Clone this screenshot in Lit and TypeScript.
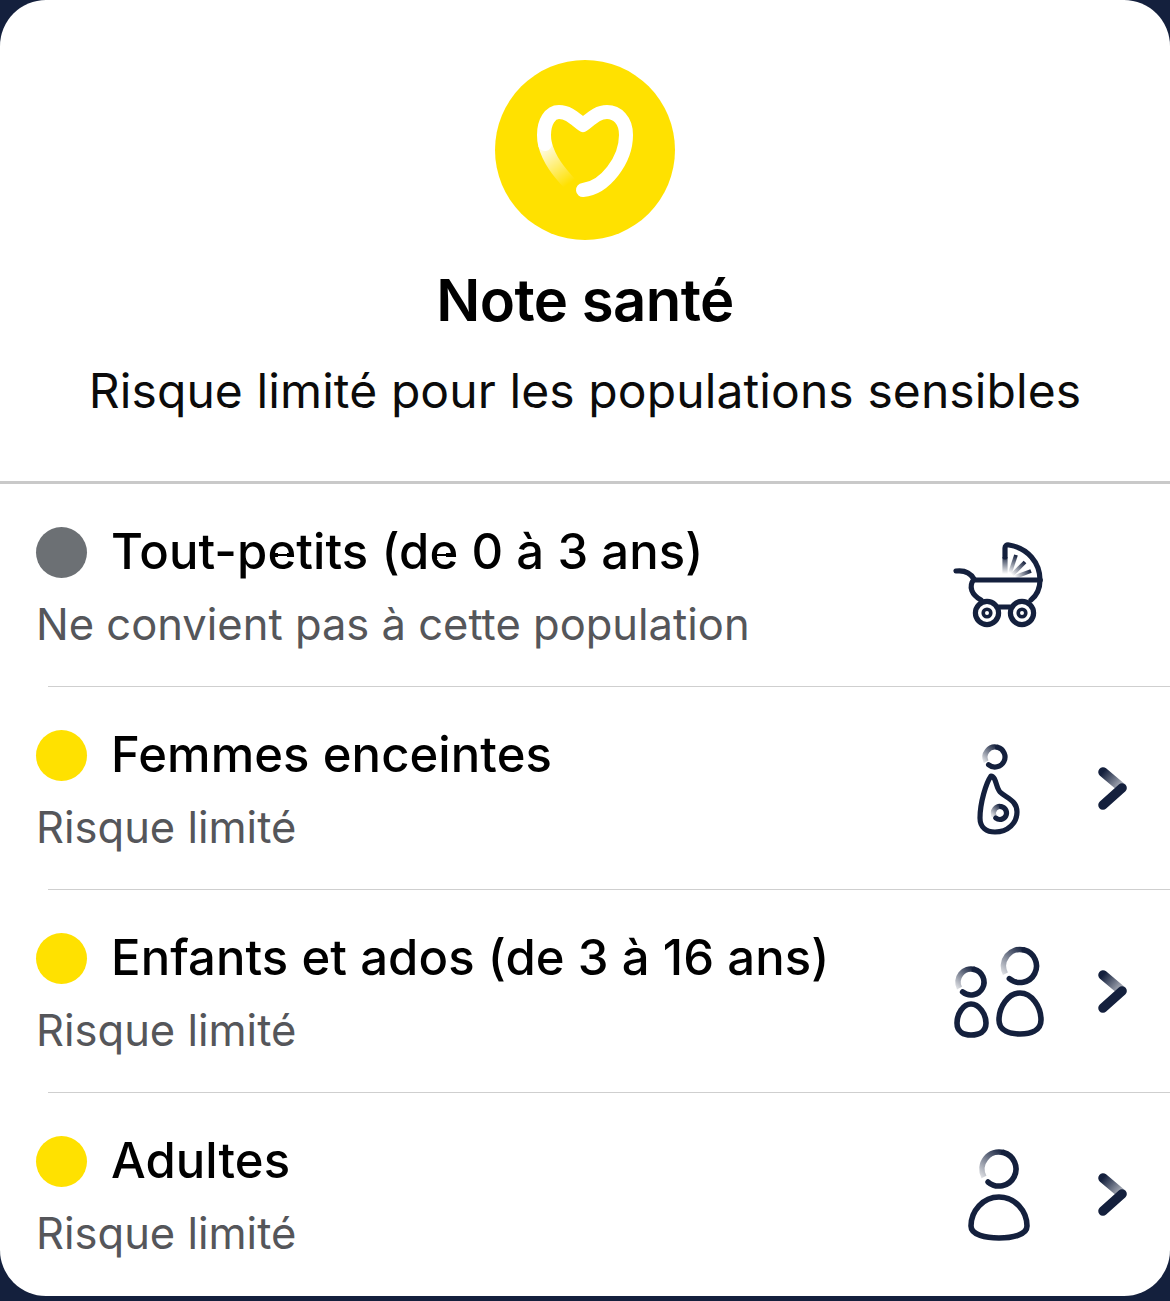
import { LitElement, html, css, svg } from "lit";
import { customElement } from "lit/decorators.js";

const INK = "#14203d";

const defs = svg`
  <defs>
    <linearGradient id="fadeHeart" gradientUnits="userSpaceOnUse" x1="47" y1="83" x2="75" y2="123">
      <stop offset="0" stop-color="#fff"/><stop offset="1" stop-color="#fff" stop-opacity="0"/>
    </linearGradient>
  </defs>`;

function ring(id: string, cx: number, cy: number, r: number, w = 5.2) {
  // ring open at lower-left, fading along its top-left part
  const a = (deg: number) => [cx + r * Math.cos((deg * Math.PI) / 180), cy + r * Math.sin((deg * Math.PI) / 180)];
  const [sx, sy] = a(130);
  const [ex, ey] = a(285);
  const [fx, fy] = a(152);
  return svg`
    <defs><linearGradient id=${id} gradientUnits="userSpaceOnUse" x1=${cx + r * 0.3} y1=${cy - r} x2=${cx - r} y2=${cy + r * 0.5}>
      <stop offset="0" stop-color=${INK}/><stop offset="1" stop-color=${INK} stop-opacity="0.15"/>
    </linearGradient></defs>
    <path d="M${sx} ${sy} A${r} ${r} 0 1 0 ${ex} ${ey}" fill="none" stroke=${INK} stroke-width=${w} stroke-linecap="round"/>
    <path d="M${ex} ${ey} A${r} ${r} 0 0 0 ${fx} ${fy}" fill="none" stroke="url(#${id})" stroke-width=${w} stroke-linecap="butt"/>`;
}

const stroller = html`<svg class="icon" viewBox="0 0 100 100" fill="none" stroke=${INK} stroke-width="5.2" stroke-linecap="round" stroke-linejoin="round">
  <defs>
    <linearGradient id="sv" gradientUnits="userSpaceOnUse" x1="55" y1="20" x2="55" y2="39"><stop offset="0" stop-color=${INK}/><stop offset="1" stop-color=${INK} stop-opacity="0"/></linearGradient>
    <linearGradient id="r1" gradientUnits="userSpaceOnUse" x1="66" y1="20" x2="60" y2="38"><stop offset="0" stop-color=${INK}/><stop offset="1" stop-color=${INK} stop-opacity="0"/></linearGradient>
    <linearGradient id="r2" gradientUnits="userSpaceOnUse" x1="75" y1="27" x2="62" y2="40"><stop offset="0" stop-color=${INK}/><stop offset="1" stop-color=${INK} stop-opacity="0"/></linearGradient>
    <linearGradient id="r3" gradientUnits="userSpaceOnUse" x1="81" y1="36" x2="65" y2="42"><stop offset="0" stop-color=${INK}/><stop offset="1" stop-color=${INK} stop-opacity="0"/></linearGradient>
  </defs>
  <path d="M55 39V22" stroke="url(#sv)" stroke-linecap="butt"/>
  <path d="M55 22V13Q55 9.5 59 10C78 13 90 28 90 45"/>
  <path d="M60 38L66 20" stroke="url(#r1)" stroke-linecap="butt" stroke-width="3.8"/>
  <path d="M62 40L75 27" stroke="url(#r2)" stroke-linecap="butt" stroke-width="3.8"/>
  <path d="M65 42L81 36" stroke="url(#r3)" stroke-linecap="butt" stroke-width="3.8"/>
  <path d="M24 45H90"/>
  <path d="M6 36C14 35 20 37 24 44C18 52 22 60 31 65"/>
  <path d="M90 45C90 54 86 61 81 65"/>
  <circle cx="37" cy="78" r="11.6"/><circle cx="72" cy="78" r="11.6"/>
  <circle cx="37" cy="78" r="3.8" stroke-width="3.6"/><circle cx="72" cy="78" r="3.8" stroke-width="3.6"/>
  <path d="M49 72H60"/>
</svg>`;

const pregnant = html`<svg class="icon" viewBox="0 0 100 100" fill="none" stroke=${INK} stroke-width="5.2" stroke-linecap="round" stroke-linejoin="round">
  ${ring("ph", 45, 19, 10)}
  <path d="M41 38C36 45 30 65 30 80C30 90 37 94 45 94C58 94 67 85 67 74C67 62 56 60 50 54C46 50 46 38 41 38Z"/>
  ${ring("pb", 50, 75, 6.5)}
</svg>`;

const kids = html`<svg class="icon" viewBox="0 0 100 100" fill="none" stroke=${INK} stroke-width="5.6" stroke-linecap="round" stroke-linejoin="round">
  ${ring("kb", 70, 25, 16.5, 5.6)}
  ${ring("ks", 21, 41, 13, 5.6)}
  <path d="M70 52C58 52 49 66 49 79C49 90 60 93 70 93C80 93 91 90 91 79C91 66 82 52 70 52Z"/>
  <path d="M21 63C13 63 7 73 7 82C7 91 14 94 21 94C29 94 36 91 36 82C36 73 29 63 21 63Z"/>
</svg>`;

const adult = html`<svg class="icon" viewBox="0 0 100 100" fill="none" stroke=${INK} stroke-width="5.6" stroke-linecap="round" stroke-linejoin="round">
  ${ring("ah", 49, 25, 17, 5.6)}
  <path d="M49 53C33 53 21 67 21 82C21 91 36 94 49 94C62 94 77 91 77 82C77 67 65 53 49 53Z"/>
</svg>`;

const chevron = html`<svg class="chev" viewBox="0 0 36 44" fill="none" stroke-width="9.5" stroke-linecap="round">
  <defs><linearGradient id="cv" gradientUnits="userSpaceOnUse" x1="9" y1="6" x2="28" y2="22"><stop offset="0" stop-color=${INK}/><stop offset="1" stop-color=${INK} stop-opacity="0.3"/></linearGradient></defs>
  <path d="M9 6L28 22" stroke="url(#cv)"/>
  <path d="M28 22L9 39" stroke=${INK}/>
</svg>`;

const rows = [
  { dot: "grey", title: "Tout-petits (de 0 à 3 ans)", sub: "Ne convient pas à cette population", icon: stroller, more: false, marks: true },
  { dot: "yellow", title: "Femmes enceintes", sub: "Risque limité", icon: pregnant, more: true, marks: false },
  { dot: "yellow", title: "Enfants et ados (de 3 à 16 ans)", sub: "Risque limité", icon: kids, more: true, marks: false },
  { dot: "yellow", title: "Adultes", sub: "Risque limité", icon: adult, more: true, marks: false },
];

@customElement("app-root")
export class AppRoot extends LitElement {
  static styles = css`
    :host { display: block; width: 1170px; height: 1301px; background: #14203d; font-family: Inter, "Liberation Sans", sans-serif; -webkit-font-smoothing: antialiased; overflow: hidden; }
    .card { height: 1296px; background: #fff; border-radius: 46px; box-sizing: border-box; overflow: hidden; }
    .head { box-sizing: border-box; padding-top: 60px; display: flex; flex-direction: column; align-items: center; border-bottom: 3px solid #c9c9c9; height: 484px; }
    .logo { width: 180px; height: 180px; display: block; }
    h1 { margin: 27px 0 0; font-size: 58px; line-height: 66px; font-weight: 600; color: #000; letter-spacing: -0.55px; }
    .lead { margin: 30px 0 0; font-size: 48px; line-height: 56px; color: #0b0b0b; font-weight: 400; letter-spacing: 0.1px; white-space: nowrap; }
    .row { height: 202px; display: flex; align-items: center; padding: 0 40px 0 36px; box-sizing: border-box; }
    .text { flex: 1; min-width: 0; }
    .line { display: flex; align-items: center; gap: 24px; height: 56px; margin-top: 5px; }
    .dot { width: 51px; height: 51px; border-radius: 50%; flex: none; }
    .dot.grey { background: #6c7074; }
    .dot.yellow { background: #ffe100; }
    .title { position: relative; font-size: 49px; line-height: 56px; font-weight: 500; color: #000; letter-spacing: 0.08px; white-space: nowrap; }
    .mark { position: absolute; top: 29px; width: 9px; height: 7px; background: repeating-linear-gradient(to bottom, #fff 0 1px, transparent 1px 3px); }
    .mark.a { left: 167px; }
    .mark.b { left: 326px; }
    .sub { margin: 17px 0 0 0; font-size: 43.5px; line-height: 54px; color: #55565a; white-space: nowrap; }
    .icon { width: 100px; height: 100px; flex: none; display: block; }
    .chev { width: 36px; height: 44px; flex: none; display: block; margin-left: 44px; }
    .nochev { width: 36px; flex: none; margin-left: 44px; }
    .sep { height: 1px; margin-left: 48px; background: #cfcfcf; }
  `;

  render() {
    return html`<div class="card">
      <div class="head">
        <svg class="logo" viewBox="0 0 180 180" fill="none">
          ${defs}
          <circle cx="90" cy="90" r="90" fill="#ffe100"/>
          <path d="M88 130C110 128 131 100 131 75C131 60 122 52 112 52C102 52 96 59 88 65C80 59 74 52 64 52C55 52 49 62 49 75C49 78 49 80 50 84" stroke="#fff" stroke-width="14" stroke-linecap="round" stroke-linejoin="round"/>
          <path d="M50 84C54 100 64 112 75 124" stroke="url(#fadeHeart)" stroke-width="14"/>
        </svg>
        <h1>Note santé</h1>
        <p class="lead">Risque limité pour les populations sensibles</p>
      </div>
      ${rows.map((r, i) => html`
        ${i > 0 ? html`<div class="sep"></div>` : ""}
        <div class="row">
          <div class="text">
            <div class="line"><span class="dot ${r.dot}"></span><span class="title">${r.title}${r.marks ? html`<span class="mark a"></span><span class="mark b"></span>` : ""}</span></div>
            <div class="sub">${r.sub}</div>
          </div>
          ${r.icon}
          ${r.more ? chevron : html`<span class="nochev"></span>`}
        </div>`)}
    </div>`;
  }
}
